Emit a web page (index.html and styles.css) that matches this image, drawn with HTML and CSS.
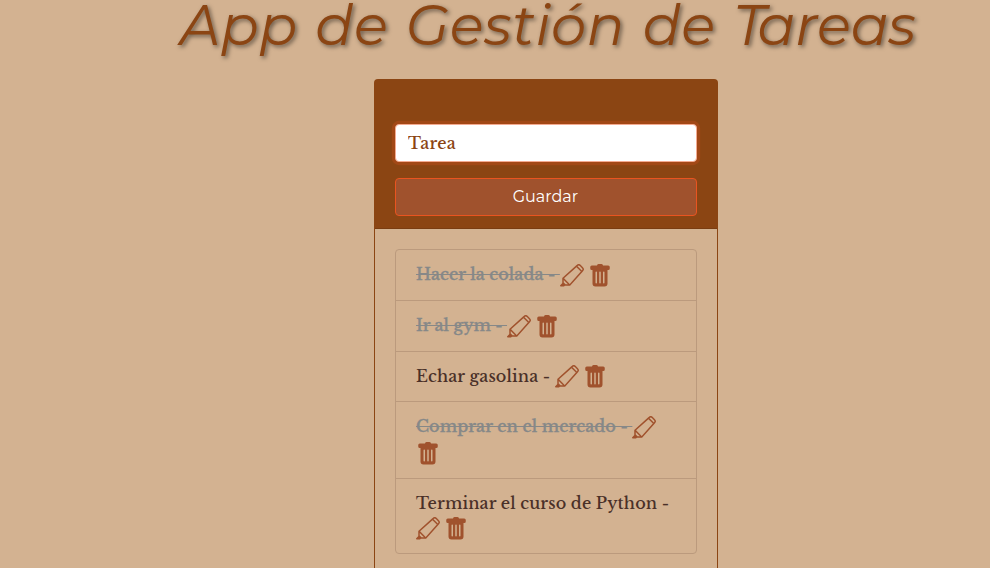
FILE: index.html
```html
<!DOCTYPE html>
<html lang="es">
<head>
<meta charset="utf-8">
<title>App de Gestión de Tareas</title>
<link rel="stylesheet" href="styles.css">
</head>
<body>
<svg class="defs" width="0" height="0">
  <symbol id="edit" viewBox="0 0 16 16"><path fill="currentColor" fill-rule="evenodd" d="M11.096.644a2 2 0 0 1 2.791.036l1.433 1.433a2 2 0 0 1 .035 2.791l-.413.435-8.070 8.995a.5.5 0 0 1-.372.166h-3a.5.5 0 0 1-.234-.058l-.412.412A.5.5 0 0 1 2.500 15h-2a.5.5 0 0 1-.354-.854l1.412-1.412A.5.5 0 0 1 1.500 12.500v-3a.5.5 0 0 1 .166-.372l8.995-8.070zm-.115 1.470L2.727 9.520l3.753 3.753 7.406-8.254zm3.585 2.170.064-.068a1 1 0 0 0-.017-1.396L13.180 1.387a1 1 0 0 0-1.396-.018l-.068.065zM5.293 13.500 2.500 10.707v1.586L3.707 13.500z"/></symbol>
  <symbol id="trash" viewBox="0 0 16 16"><path fill="currentColor" d="M2.500 1a1 1 0 0 0-1 1v1a1 1 0 0 0 1 1H3v9a2 2 0 0 0 2 2h6a2 2 0 0 0 2-2V4h.5a1 1 0 0 0 1-1V2a1 1 0 0 0-1-1H10a1 1 0 0 0-1-1H7a1 1 0 0 0-1 1zm3 4a.5.5 0 0 1 .5.500v7a.5.5 0 0 1-1 0v-7a.5.5 0 0 1 .5-.5M8 5a.5.5 0 0 1 .5.500v7a.5.5 0 0 1-1 0v-7A.5.5 0 0 1 8 5m3 .5v7a.5.5 0 0 1-1 0v-7a.5.5 0 0 1 1 0"/></symbol>
</svg>
<h1 class="title">App de Gestión de <span class="kern">T</span><span class="tight">areas</span></h1>
<main class="card">
  <form class="card-header">
    <input class="field" type="text" placeholder="Tarea" aria-label="Tarea">
    <button class="save" type="button">Guardar</button>
  </form>
  <ul class="list">
    <li class="item"><span class="text done">Hacer la colada - </span><svg class="icon"><use href="#edit"/></svg><svg class="icon"><use href="#trash"/></svg></li>
    <li class="item gym"><span class="text done">Ir al gym - </span><svg class="icon"><use href="#edit"/></svg><svg class="icon"><use href="#trash"/></svg></li>
    <li class="item short"><span class="text">Echar gasolina - </span><svg class="icon"><use href="#edit"/></svg><svg class="icon"><use href="#trash"/></svg></li>
    <li class="item wide"><span class="text done">Comprar en el mercado - </span><svg class="icon"><use href="#edit"/></svg><svg class="icon"><use href="#trash"/></svg></li>
    <li class="item last"><span class="text">Terminar el curso de Python - </span><svg class="icon"><use href="#edit"/></svg><svg class="icon"><use href="#trash"/></svg></li>
  </ul>
</main>
</body>
</html>
```
FILE: styles.css
```css
* { box-sizing: border-box; }
body { margin: 0; height: 568px; background: #d3b291; }
.defs { display: block; }
.title {
  margin: 0; padding-left: 180px; height: 79px; white-space: nowrap;
  font: italic 400 56px/50px Montserrat, Inter, sans-serif; letter-spacing: .6px; word-spacing: 2.2px;
  color: #8b4513; text-shadow: 2px 2px 4px rgba(0, 0, 0, .5);
}
.kern { letter-spacing: -8px; }
.tight { letter-spacing: -.1px; }
.card {
  width: 344px; height: 489px; margin-left: 374px;
  border: 1px solid #8b4513; border-bottom: 0; border-radius: 4px 4px 0 0;
}
.card-header {
  display: flex; flex-direction: column; gap: 16px;
  height: 149px; padding: 44px 20px 12px;
  background: #8b4513; border-bottom: 1px solid #7a3d11;
}
.field {
  height: 38px; padding: 0 12px; border: 1px solid #f4aa90; border-radius: 4px;
  background: #fff; outline: 0; box-shadow: 0 0 0 3.2px rgba(233, 84, 32, .25);
  font: 500 16px "Libre Baskerville", "Liberation Serif", serif; letter-spacing: .25px;
}
.field::placeholder { color: #8b4513; opacity: 1; }
.save {
  height: 38px; padding: 0 1px 1px 0; border: 1px solid #e95420; border-radius: 4px;
  background: #a0522d; color: #fff; font: 450 16px Montserrat, Inter, sans-serif;
}
.list {
  margin: 20px; padding: 0; list-style: none;
  border: 1px solid #bb9a7d; border-radius: 4px;
}
.item {
  display: flex; flex-wrap: wrap; align-content: flex-start; column-gap: 4px;
  height: 51px; padding: 13px 20px 0; border-bottom: 1px solid #bb9a7d;
}
.short { height: 50px; }
.wide { height: 77px; row-gap: 1px; }
.last { height: 74px; border-bottom: 0; }
.text {
  white-space: pre; height: 26px; margin: -1px -4px 0 0;
  font: 500 16px/24px "Libre Baskerville", "Liberation Serif", serif; letter-spacing: .12px;
  color: #4a3028;
}
.done { color: #868888; text-decoration: line-through 1px; letter-spacing: .08px; -webkit-text-stroke: .3px #868888; }
.gym .text { letter-spacing: 0; }
.icon { width: 24px; height: 24px; margin-top: 1px; color: #a0522d; }
.short .icon, .last .icon { margin-top: 0; }
```
